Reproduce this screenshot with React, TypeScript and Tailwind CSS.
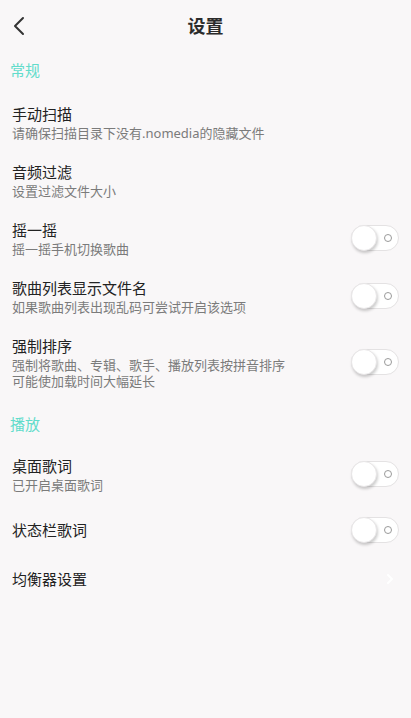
import React from 'react';

type Item = {
  title: string;
  sub?: string[];
  toggle?: boolean;
  arrow?: boolean;
  className: string;
};

const general: Item[] = [
  { title: '手动扫描', sub: ['请确保扫描目录下没有.nomedia的隐藏文件'], className: 'py-[10px]' },
  { title: '音频过滤', sub: ['设置过滤文件大小'], className: 'py-[10px]' },
  { title: '摇一摇', sub: ['摇一摇手机切换歌曲'], toggle: true, className: 'py-[10px]' },
  { title: '歌曲列表显示文件名', sub: ['如果歌曲列表出现乱码可尝试开启该选项'], toggle: true, className: 'py-[10px]' },
  {
    title: '强制排序',
    sub: ['强制将歌曲、专辑、歌手、播放列表按拼音排序', '可能使加载时间大幅延长'],
    toggle: true,
    className: 'py-[10px]',
  },
];

const playback: Item[] = [
  { title: '桌面歌词', sub: ['已开启桌面歌词'], toggle: true, className: 'py-[10px]' },
  { title: '状态栏歌词', toggle: true, className: 'pt-[14px] pb-[16px]' },
  { title: '均衡器设置', arrow: true, className: 'pt-[9px] pb-[9px]' },
];

const Toggle = () => (
  <div className="relative w-[48px] h-[26px] rounded-full bg-white border border-[#e4e2e3] shrink-0">
    <div className="absolute left-[-1px] top-[-1px] w-[26px] h-[26px] rounded-full bg-white border border-[#e8e6e7] shadow-[1px_2px_3px_rgba(0,0,0,0.2)]" />
    <div className="absolute right-[6px] top-[8px] w-[8px] h-[8px] rounded-full border-[1.5px] border-[#9a9a9a]" />
  </div>
);

const Row = ({ item }: { item: Item }) => (
  <div className={`flex items-center justify-between pl-[12px] pr-[12px] ${item.className}`}>
    <div>
      <div className="text-[15px] leading-[22px] text-[#222]">{item.title}</div>
      {item.sub &&
        item.sub.map((s) => (
          <div key={s} className="text-[13px] leading-[16px] text-[#7b7b7b]">
            {s}
          </div>
        ))}
    </div>
    {item.toggle && <Toggle />}
    {item.arrow && (
      <svg width="10" height="14" viewBox="0 0 10 14" className="mr-[4px]">
        <path d="M3 3 L7 7 L3 11" fill="none" stroke="#ffffff" strokeWidth="2" strokeLinecap="round" strokeLinejoin="round" />
      </svg>
    )}
  </div>
);

export default function App() {
  return (
    <div
      className="w-[411px] h-[718px] bg-[#f9f7f8] overflow-hidden"
      style={{ fontFamily: '"Noto Sans", "Noto Sans CJK SC", sans-serif' }}
    >
      {/* Top bar */}
      <div className="relative h-[52px] flex items-center justify-center">
        <svg width="14" height="20" viewBox="0 0 14 20" className="absolute left-[12px] top-[16px]">
          <path d="M11 2 L3 10 L11 18" fill="none" stroke="#333" strokeWidth="2" strokeLinecap="round" strokeLinejoin="round" />
        </svg>
        <div className="text-[18px] font-bold text-[#2b2b2b]">设置</div>
      </div>

      {/* 常规 */}
      <div className="pl-[10px] pt-[7px] pb-[12px] text-[15px] leading-[22px] text-[#62dccb]">常规</div>
      {general.map((item) => (
        <Row key={item.title} item={item} />
      ))}

      {/* 播放 */}
      <div className="pl-[10px] pt-[14px] pb-[10px] text-[15px] leading-[22px] text-[#62dccb]">播放</div>
      {playback.map((item) => (
        <Row key={item.title} item={item} />
      ))}
    </div>
  );
}
